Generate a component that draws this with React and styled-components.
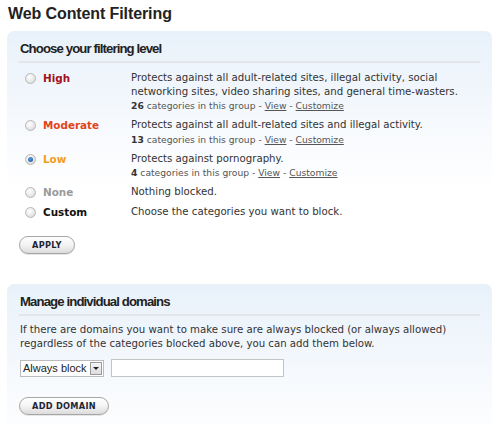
import React, { useState } from 'react'
import styled, { createGlobalStyle } from 'styled-components'

const GlobalStyle = createGlobalStyle`
  html, body { margin: 0; padding: 0; background: #fff; }
  body { font-family: "DejaVu Sans", Verdana, sans-serif; color: #333; }
`;

const Page = styled.div`
  width: 500px;
  height: 440px;
  padding: 4px 8px 0 7px;
  box-sizing: border-box;
  overflow: hidden;
`;

const Title = styled.h1`
  margin: 0 0 8px 1px;
  font-family: "Liberation Sans", Arial, sans-serif;
  font-size: 16px;
  font-weight: bold;
  letter-spacing: -0.1px;
  color: #222;
  line-height: 19px;
`;

const Panel = styled.div`
  border-radius: 7px 7px 0 0;
  background: linear-gradient(to bottom, #e8f1fa 0px, #f6f9fd 90px, #ffffff 160px);
  padding: 9px 12px 10px 12px;
  margin-bottom: ${(p) => p.$gap || 0}px;
`;

const PanelTitle = styled.h2`
  margin: 0;
  padding: 0 0 4px 1px;
  font-family: "Liberation Sans", Arial, sans-serif;
  font-size: 13.2px;
  font-weight: bold;
  letter-spacing: -0.9px;
  color: #222;
  line-height: 17px;
  border-bottom: 2px solid #e2e6ea;
`;

const Levels = styled.div`
  display: flex;
  flex-direction: column;
  gap: 6px;
  padding: 8px 0 0 6px;
`;

const Level = styled.label`
  display: grid;
  grid-template-columns: 18px 88px 1fr;
  align-items: start;
  cursor: pointer;
`;

const Radio = styled.span`
  width: 11px;
  height: 11px;
  margin-top: 2px;
  border-radius: 50%;
  box-sizing: border-box;
  border: 1px solid #b8b8b8;
  background: radial-gradient(circle at 40% 35%, #fff 0%, #e6e6e6 60%, #cfcfcf 100%);
  display: flex;
  align-items: center;
  justify-content: center;
  &::after {
    content: '';
    display: ${(p) => (p.$checked ? 'block' : 'none')};
    width: 5px;
    height: 5px;
    border-radius: 50%;
    background: radial-gradient(circle at 40% 35%, #5aa0e0 0%, #1a4f8a 100%);
  }
`;

const LevelName = styled.span`
  font-size: 10.4px;
  font-weight: bold;
  line-height: 14px;
  color: ${(p) => p.$color};
`;

const Desc = styled.div`
  font-size: 10.2px;
  line-height: 13.5px;
  color: #333;
`;

const Meta = styled.div`
  font-size: 9.2px;
  line-height: 13px;
  margin-top: 1px;
  color: #555;
  b { color: #333; }
  a { color: #555; text-decoration: underline; }
`;

const Button = styled.button`
  font-family: "DejaVu Sans", Verdana, sans-serif;
  font-size: 8.2px;
  font-weight: bold;
  letter-spacing: 0.3px;
  color: #1e2535;
  height: 18px;
  padding: 0 ${(p) => p.$pad || 12}px;
  border: 1px solid #a6a6a6;
  border-radius: 9px;
  background: linear-gradient(to bottom, #ffffff 0%, #f3f3f3 50%, #dcdcdc 100%);
  box-shadow: 0 1px 0 #e6e6e6;
  cursor: pointer;
`;

const ButtonRow = styled.div`
  padding: ${(p) => p.$top || 18}px 0 0 0;
`;

const Para = styled.p`
  margin: 7px 0 0 1px;
  font-size: 10.2px;
  line-height: 14px;
  color: #333;
`;

const FormRow = styled.div`
  display: flex;
  align-items: center;
  gap: 7px;
  padding: 8px 0 0 1px;
`;

const SelectWrap = styled.div`
  position: relative;
  width: 84px;
  height: 17px;
  box-sizing: border-box;
  border: 1px solid #bcbcbc;
  background: #fff;
`;

const Select = styled.select`
  appearance: none;
  -webkit-appearance: none;
  display: block;
  border: none;
  outline: none;
  background: transparent;
  width: 100%;
  height: 15px;
  padding: 0 0 0 2px;
  margin: 0;
  font-family: "Liberation Sans", Arial, sans-serif;
  font-size: 11px;
  color: #222;
  line-height: 15px;
`;

const Arrow = styled.span`
  position: absolute;
  right: 1px;
  top: 1px;
  width: 12px;
  height: 13px;
  box-sizing: border-box;
  border: 1px solid #9a9a9a;
  background: linear-gradient(to bottom, #f6f6f6, #dcdcdc);
  pointer-events: none;
  display: flex;
  align-items: center;
  justify-content: center;
  &::after {
    content: '';
    border-left: 3px solid transparent;
    border-right: 3px solid transparent;
    border-top: 3px solid #222;
  }
`;

const TextInput = styled.input`
  width: 173px;
  height: 18px;
  box-sizing: border-box;
  border: 1px solid #c4c4c4;
  outline: none;
`;

const levels = [
  {
    key: 'high',
    name: 'High',
    color: '#a3111c',
    desc: 'Protects against all adult-related sites, illegal activity, social networking sites, video sharing sites, and general time-wasters.',
    count: 26,
  },
  {
    key: 'moderate',
    name: 'Moderate',
    color: '#e2441a',
    desc: 'Protects against all adult-related sites and illegal activity.',
    count: 13,
  },
  { key: 'low', name: 'Low', color: '#f29d1e', desc: 'Protects against pornography.', count: 4 },
  { key: 'none', name: 'None', color: '#9a9a9a', desc: 'Nothing blocked.' },
  { key: 'custom', name: 'Custom', color: '#111', desc: 'Choose the categories you want to block.' },
];

const App = () => {
  const [level, setLevel] = useState('low');

  return (
    <Page>
      <GlobalStyle />
      <Title>Web Content Filtering</Title>
      <Panel $gap={20}>
        <PanelTitle>Choose your filtering level</PanelTitle>
        <Levels>
          {levels.map((l) => (
            <Level key={l.key} onClick={() => setLevel(l.key)}>
              <Radio $checked={level === l.key} />
              <LevelName $color={l.color}>{l.name}</LevelName>
              <div>
                <Desc>{l.desc}</Desc>
                {l.count && (
                  <Meta>
                    <b>{l.count}</b> categories in this group - <a href="#">View</a> -{' '}
                    <a href="#">Customize</a>
                  </Meta>
                )}
              </div>
            </Level>
          ))}
        </Levels>
        <ButtonRow $top={14}>
          <Button>APPLY</Button>
        </ButtonRow>
      </Panel>
      <Panel>
        <PanelTitle>Manage individual domains</PanelTitle>
        <Para>
          If there are domains you want to make sure are always blocked (or always allowed)
          regardless of the categories blocked above, you can add them below.
        </Para>
        <FormRow>
          <SelectWrap>
            <Select defaultValue="block">
              <option value="block">Always block</option>
              <option value="allow">Always allow</option>
            </Select>
            <Arrow />
          </SelectWrap>
          <TextInput type="text" />
        </FormRow>
        <ButtonRow $top={17}>
          <Button>ADD DOMAIN</Button>
        </ButtonRow>
      </Panel>
    </Page>
  )
}

export default App
